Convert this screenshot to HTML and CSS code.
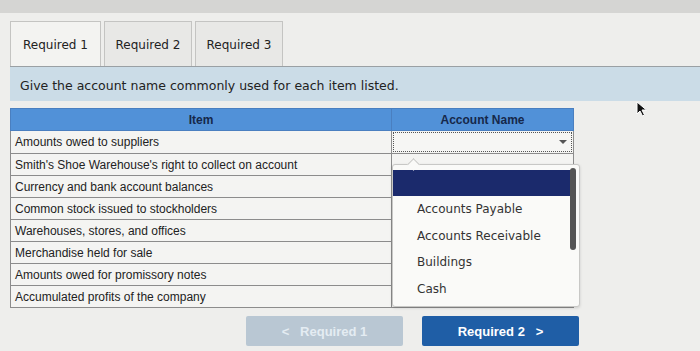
FILE: index.html
```html
<!DOCTYPE html>
<html lang="en">
<head>
    <meta charset="UTF-8">
    <title>Required 1</title>
    <link rel="stylesheet" href="styles.css">
</head>
<body>
    <div class="topbar"></div>

    <div class="tabs">
        <div class="tab active">Required 1</div>
        <div class="tab">Required 2</div>
        <div class="tab">Required 3</div>
    </div>

    <div class="instructions">Give the account name commonly used for each item listed.</div>

    <div class="workarea">
        <table class="items">
            <thead>
                <tr>
                    <th class="col-item">Item</th>
                    <th class="col-account">Account Name</th>
                </tr>
            </thead>
            <tbody>
                <tr>
                    <td>Amounts owed to suppliers</td>
                    <td class="select-cell"><div class="select"><span class="arrow"></span></div></td>
                </tr>
                <tr><td>Smith's Shoe Warehouse's right to collect on account</td><td></td></tr>
                <tr><td>Currency and bank account balances</td><td></td></tr>
                <tr><td>Common stock issued to stockholders</td><td></td></tr>
                <tr><td>Warehouses, stores, and offices</td><td></td></tr>
                <tr><td>Merchandise held for sale</td><td></td></tr>
                <tr><td>Amounts owed for promissory notes</td><td></td></tr>
                <tr><td>Accumulated profits of the company</td><td></td></tr>
            </tbody>
        </table>

        <div class="dropdown">
            <span class="notch"></span>
            <div class="option selected"></div>
            <div class="option">Accounts Payable</div>
            <div class="option">Accounts Receivable</div>
            <div class="option">Buildings</div>
            <div class="option">Cash</div>
            <span class="scrollbar"></span>
        </div>
    </div>

    <div class="nav">
        <button class="btn prev">&lt;&nbsp;&nbsp;&nbsp;Required 1</button>
        <button class="btn next">Required 2&nbsp;&nbsp;&nbsp;&gt;</button>
    </div>

    <svg class="cursor" width="12" height="16" viewBox="0 0 12 16">
        <path d="M1 1 L1 13 L4 10 L6.5 15 L8.5 14 L6 9 L10.5 9 Z" fill="#111" stroke="#fff" stroke-width="1"/>
    </svg>
</body>
</html>
```

FILE: styles.css
```css
body {
    margin: 0;
    background: #eeeeec;
    font-family: "DejaVu Sans", Verdana, sans-serif;
    color: #222;
    position: relative;
    height: 351px;
    overflow: hidden;
}
.topbar {
    height: 13px;
    background: #d5d5d3;
}
.tabs {
    display: flex;
    gap: 3px;
    margin-top: 8px;
    padding-left: 10px;
}
.tab {
    width: 88px;
    height: 45px;
    line-height: 46px;
    text-align: center;
    font-size: 12px;
    color: #222;
    background: #e8e8e6;
    border: 1px solid #c4c4c2;
    border-bottom: none;
    box-sizing: border-box;
}
.tab.active {
    width: 91px;
    background: #f3f3f1;
}
.instructions {
    margin-left: 10px;
    height: 34px;
    line-height: 37px;
    padding-left: 10px;
    background: #cbdce7;
    border-top: 1px solid #9aa0a4;
    font-size: 12.5px;
    color: #222;
}
.workarea {
    position: relative;
    margin: 7px 0 0 10px;
}
.items {
    border-collapse: collapse;
    width: 564px;
    font-family: "Liberation Sans", Arial, sans-serif;
    font-size: 12px;
    background: #f4f4f2;
}
.items th {
    height: 21px;
    padding: 0;
    background: #5191d8;
    color: #16284a;
    font-weight: bold;
    border: 1px solid #4a7fc0;
}
.col-item {
    width: 380px;
}
.items td {
    height: 22px;
    box-sizing: border-box;
    padding: 0 0 0 4px;
    line-height: 14px;
    border: 1px solid #8c8c8c;
    color: #222;
}
.items td.select-cell {
    padding: 0;
}
.select {
    position: relative;
    height: 18px;
    margin: 1px;
    border: 1px dotted #555;
    background: #f6f6f4;
}
.arrow {
    position: absolute;
    right: 4px;
    top: 7px;
    border-left: 4px solid transparent;
    border-right: 4px solid transparent;
    border-top: 4px solid #555;
}
.dropdown {
    position: absolute;
    left: 382px;
    top: 56px;
    width: 188px;
    height: 143px;
    background: #fafaf8;
    border: 1px solid #c8c8c6;
    border-radius: 3px;
    box-shadow: 0 1px 3px rgba(0, 0, 0, 0.15);
    box-sizing: border-box;
    padding-top: 5px;
    font-size: 12px;
    color: #333;
}
.notch {
    position: absolute;
    left: 16px;
    top: -5px;
    width: 8px;
    height: 8px;
    background: #fafaf8;
    border-left: 1px solid #c8c8c6;
    border-top: 1px solid #c8c8c6;
    transform: rotate(45deg);
}
.option {
    height: 26.5px;
    line-height: 26px;
    padding-left: 24px;
}
.option.selected {
    height: 26px;
    margin-right: 8px;
    background: #1b2a6c;
}
.scrollbar {
    position: absolute;
    right: 3px;
    top: 3px;
    width: 6px;
    height: 82px;
    border-radius: 3px;
    background: #555;
}
.nav {
    display: flex;
    gap: 19px;
    margin: 8px 0 0 246px;
}
.btn {
    width: 157px;
    height: 30px;
    border: none;
    border-radius: 2px;
    font-family: "Liberation Sans", Arial, sans-serif;
    font-size: 13px;
    font-weight: bold;
    color: #fff;
}
.btn.prev {
    background: #b9c7d3;
    color: #e4ecf2;
}
.btn.next {
    background: #1f5ea6;
}
.cursor {
    position: absolute;
    left: 636px;
    top: 101px;
}
```
